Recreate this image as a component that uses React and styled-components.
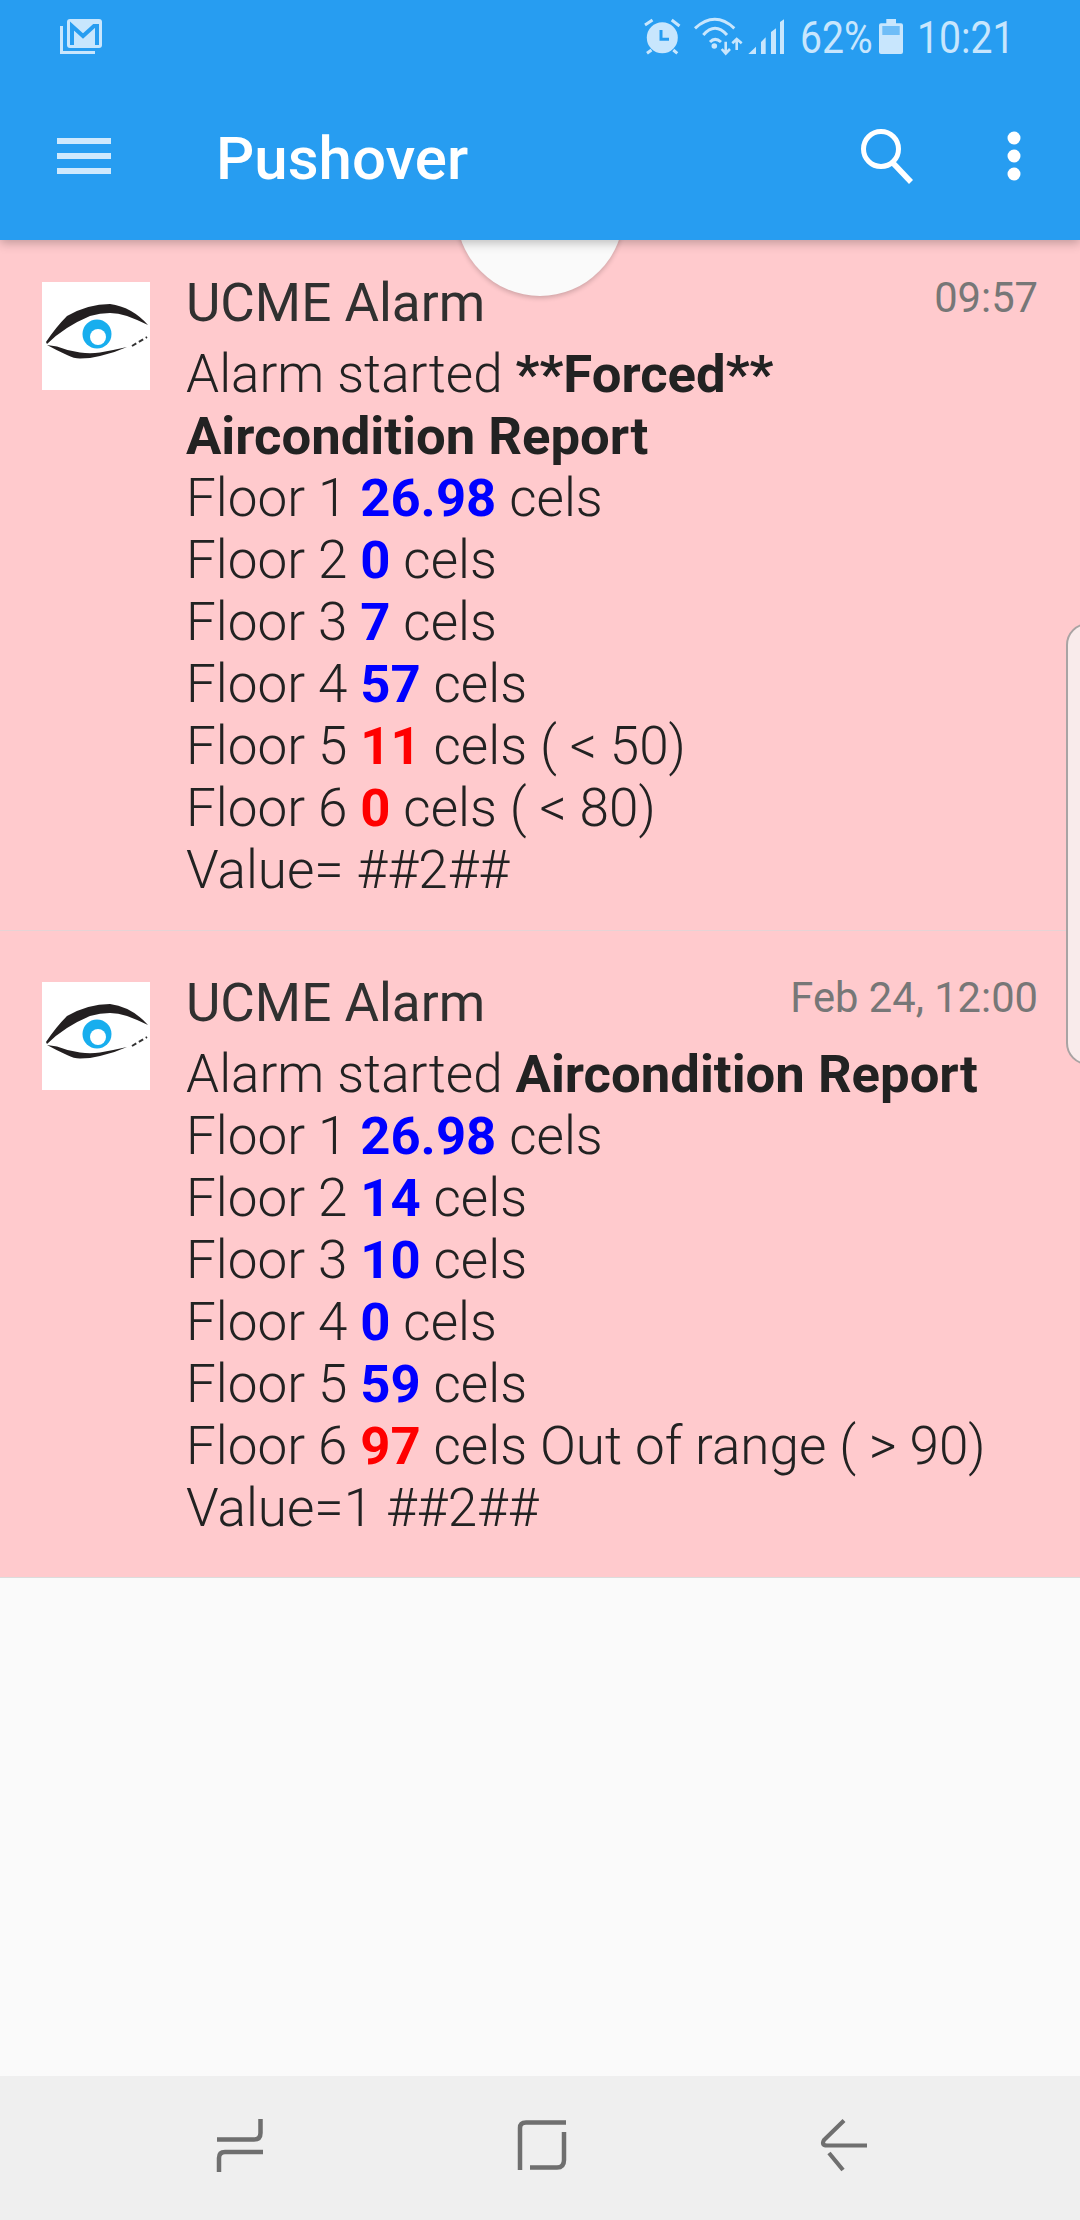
import React from "react";
import styled, { createGlobalStyle } from "styled-components";

const Global = createGlobalStyle`
  html, body { margin: 0; padding: 0; background: #fafafa; }
  body { font-family: Roboto, "Liberation Sans", sans-serif; }
`;
const Page = styled.div`
  position: relative; width: 1080px; height: 2220px; overflow: hidden;
  display: flex; flex-direction: column; background: #fafafa;
`;
const Header = styled.header`
  position: relative; z-index: 3; height: 240px; flex: none; background: #279df1;
  display: flex; flex-direction: column;
  box-shadow: 0 3px 10px rgba(0,0,0,.25);
`;
const StatusBar = styled.div`
  height: 72px; flex: none; display: flex; align-items: center; padding: 0 72px 0 60px;
`;
const StatusRight = styled.div`
  margin-left: auto; display: flex; align-items: center;
`;
const StatusText = styled.span`
  display: block; width: ${p => p.$w}px; margin-left: ${p => p.$ml}px; flex: none;
  font-size: 45px; font-weight: 400; color: #c8e6fd; line-height: 1; white-space: nowrap;
  transform: scaleX(.87); transform-origin: left center; position: relative; top: 1px;
`;
const Toolbar = styled.div`
  flex: 1; display: flex; align-items: center; padding: 0 59px 0 57px; color: #fff;
`;
const Title = styled.h1`
  margin: 4px 0 0 105px; font-size: 60px; font-weight: 500; flex: 1;
`;
const Icon = styled.svg`
  display: block; flex: none; overflow: visible; margin-left: ${p => p.$ml || 0}px;
`;
const Content = styled.main`
  background: #ffcacd; border-bottom: 1px solid #dcdcdc; flex: none;
`;
const Row = styled.article`
  display: flex; padding: ${p => p.$top}px 42px ${p => p.$bottom}px 42px;
  & + & { border-top: 1px solid #e6d3d5; }
`;
const Avatar = styled.svg`
  width: 108px; height: 108px; flex: none; background: #fff; display: block;
`;
const Body = styled.div`
  flex: 1; margin-left: 36px; min-width: 0;
`;
const TitleLine = styled.div`
  display: flex; justify-content: space-between; align-items: flex-start; height: 61px;
`;
const AppName = styled.span`
  font-size: 53px; font-weight: 400; color: #303030; line-height: 48px; margin-top: -3px;
`;
const Time = styled.span`
  font-size: 41.700px; color: #777; line-height: 44px; margin-top: -6px; font-weight: 400;
`;
const Line = styled.div`
  font-size: 53px; line-height: 62px; font-weight: 300; color: #222; white-space: nowrap;
`;
const B = styled.b`
  font-size: 52.650px; font-weight: 700; color: ${p => p.$c || "#222"};
`;
const Blank = styled.div`flex: 1;`;
const NavBar = styled.nav`
  height: 144px; flex: none; background: #efefef; box-sizing: border-box; padding: 0 84px 6px 89px;
  display: grid; grid-template-columns: repeat(3, 302px); align-items: center; justify-items: center;
`;
const Pull = styled.div`
  position: absolute; z-index: 2; left: 456px; top: 126px; width: 168px; height: 170px;
  background: #fafafa; border-radius: 50%;
  box-shadow: 0 2px 5px rgba(0,0,0,.2);
`;
const EdgeHandle = styled.div`
  position: absolute; z-index: 2; right: -10px; top: 623px; width: 24px; height: 442px;
  background: #f9ebeb; border: 2px solid #a9a3a3; border-radius: 22px 0 0 22px; box-sizing: border-box;
`;

const Eye = () => (
  <Avatar viewBox="0 0 108 108">
    <path d="M4 60 Q14 45 25 34 Q46 22 68 22 Q90 25 106 43 Q96 38 85 34 Q76 31 68 31 Q58 31 48 34 Q36 39 25 46 Q14 53 5 62Z" fill="#231f20" />
    <path d="M5 63 Q14 68 25 73 Q32 76.500 38 76.500 Q48 76.500 58 74 Q72 71 85 65 Q72 68 58 70.500 Q48 72 38 70.500 Q26 69 15 64.500Z" fill="#231f20" />
    <path d="M90 64 L105 55" stroke="#333" strokeWidth="2" strokeDasharray="5 3" fill="none" />
    <circle cx="55" cy="52" r="14.500" fill="#18aeee" />
    <circle cx="56" cy="55" r="8" fill="#fff" />
  </Avatar>
);

const lines1 = [
  ["Floor 1 ", "26.98", "#0000ff", " cels"],
  ["Floor 2 ", "0", "#0000ff", " cels"],
  ["Floor 3 ", "7", "#0000ff", " cels"],
  ["Floor 4 ", "57", "#0000ff", " cels"],
  ["Floor 5 ", "11", "#ff0000", " cels ( < 50)"],
  ["Floor 6 ", "0", "#ff0000", " cels ( < 80)"],
];
const lines2 = [
  ["Floor 1 ", "26.98", "#0000ff", " cels"],
  ["Floor 2 ", "14", "#0000ff", " cels"],
  ["Floor 3 ", "10", "#0000ff", " cels"],
  ["Floor 4 ", "0", "#0000ff", " cels"],
  ["Floor 5 ", "59", "#0000ff", " cels"],
  ["Floor 6 ", "97", "#ff0000", " cels Out of range ( > 90)"],
];
const Floors = ({ rows }) => rows.map(([a, v, c, z]) => (
  <Line key={a}>{a}<B $c={c}>{v}</B>{z}</Line>
));

const S = "#c8e6fd";
const BG = "#279df1";

export default function App() {
  return (
    <Page>
      <Global />
      <Header>
        <StatusBar>
          <Icon width="42" height="35" viewBox="0 0 42 35">
            <path d="M1.500 7v26.500H35" fill="none" stroke={S} strokeWidth="3" />
            <rect x="7" y="0" width="35" height="29" rx="3" fill={S} />
            <path d="M12 26V7l11 10L34 7 37 7v19" fill="none" stroke={BG} strokeWidth="4" />
          </Icon>
          <StatusRight>
            <Icon width="35" height="35" viewBox="0 0 35 35">
              <circle cx="17.300" cy="18.700" r="15.500" fill={S} />
              <path d="M0 6l7.500-5M26.700 1L34.500 7M2 34.300l4.500-3.300M28.300 31l4 3.300" stroke={S} strokeWidth="3" fill="none" />
              <path d="M16 11v9.300h8" fill="none" stroke={BG} strokeWidth="3" />
            </Icon>
            <Icon width="48" height="35" viewBox="0 0 48 35" $ml={14}>
              <path d="M1 9.300 Q21 -8.700 40.300 9.300M9.300 16 Q21 2.600 33 16M16 23 Q21 17.600 27 23" fill="none" stroke={S} strokeWidth="3" />
              <circle cx="20.300" cy="27" r="2.800" fill={S} />
              <path d="M31.700 22.700V34M27.700 30l4 4.500 4.300-4.500M42.700 31V20M38.300 24.300l4.400-4.300 5 4.300" fill="none" stroke={S} strokeWidth="2.600" />
            </Icon>
            <Icon width="36" height="35" viewBox="0 0 36 35" $ml={6}>
              <path d="M.3 35L8 27.700V35zM13 35V23l4.700-4.700V35zM23 35V13l5-3.700V35zM32 35V3l4-2.700V35z" fill={S} />
            </Icon>
            <StatusText $w={68} $ml={16}>62%</StatusText>
            <Icon width="24" height="35" viewBox="0 0 24 35" $ml={11}>
              <path d="M7.300 0H17v4.300h5a2 2 0 0 1 2 2V33a2 2 0 0 1-2 2H2a2 2 0 0 1-2-2V6.300a2 2 0 0 1 2-2h5.300z" fill={S} />
              <rect x="3.300" y="7" width="17.400" height="9" fill="#6fbdf7" />
            </Icon>
            <StatusText $w={91} $ml={14}>10:21</StatusText>
          </StatusRight>
        </StatusBar>
        <Toolbar>
          <Icon width="54" height="36" viewBox="0 0 54 36">
            <path d="M0 3h54M0 18h54M0 33h54" stroke="#cfe9fd" strokeWidth="6" />
          </Icon>
          <Title>Pushover</Title>
          <Icon width="54" height="52" viewBox="0 0 54 52">
            <circle cx="20" cy="19" r="17.500" fill="none" stroke="#fff" strokeWidth="5" />
            <path d="M32 33l18 19" stroke="#fff" strokeWidth="5.500" fill="none" />
          </Icon>
          <Icon width="14" height="50" viewBox="0 0 14 50" $ml={92}>
            <ellipse cx="7" cy="7" rx="6.500" ry="6.500" fill="#fff" />
            <ellipse cx="7" cy="25" rx="6.500" ry="6.500" fill="#fff" />
            <ellipse cx="7" cy="43" rx="6.500" ry="6.500" fill="#fff" />
          </Icon>
        </Toolbar>
      </Header>
      <Content>
        <Row $top={42} $bottom={29}>
          <Eye />
          <Body>
            <TitleLine><AppName>UCME Alarm</AppName><Time>09:57</Time></TitleLine>
            <Line>Alarm started <B>**Forced**</B></Line>
            <Line><B>Aircondition Report</B></Line>
            <Floors rows={lines1} />
            <Line>Value= ##2##</Line>
          </Body>
        </Row>
        <Row $top={51} $bottom={38}>
          <Eye />
          <Body>
            <TitleLine><AppName>UCME Alarm</AppName><Time>Feb 24, 12:00</Time></TitleLine>
            <Line>Alarm started <B>Aircondition Report</B></Line>
            <Floors rows={lines2} />
            <Line>Value=1 ##2##</Line>
          </Body>
        </Row>
      </Content>
      <Blank />
      <NavBar>
        <Icon width="46" height="53" viewBox="0 0 46 53">
          <path d="M0 20.500H37q6.500 0 6.500-6.500V0M46 33H8q-6 0-6 6V53" fill="none" stroke="#6f6f6f" strokeWidth="4.500" />
        </Icon>
        <Icon width="48" height="50" viewBox="0 0 48 50">
          <path d="M2 50V8q0-5.500 6-5.500H48M46 12V40q0 7.500-7 7.500H12" fill="none" stroke="#6f6f6f" strokeWidth="4.500" />
        </Icon>
        <Icon width="46" height="52" viewBox="0 0 46 52">
          <path d="M23 1.500L3 21q-3 5.500 3 5.500H46M8 34L22 51" fill="none" stroke="#6f6f6f" strokeWidth="4.200" />
        </Icon>
      </NavBar>
      <Pull />
      <EdgeHandle />
    </Page>
  );
}
